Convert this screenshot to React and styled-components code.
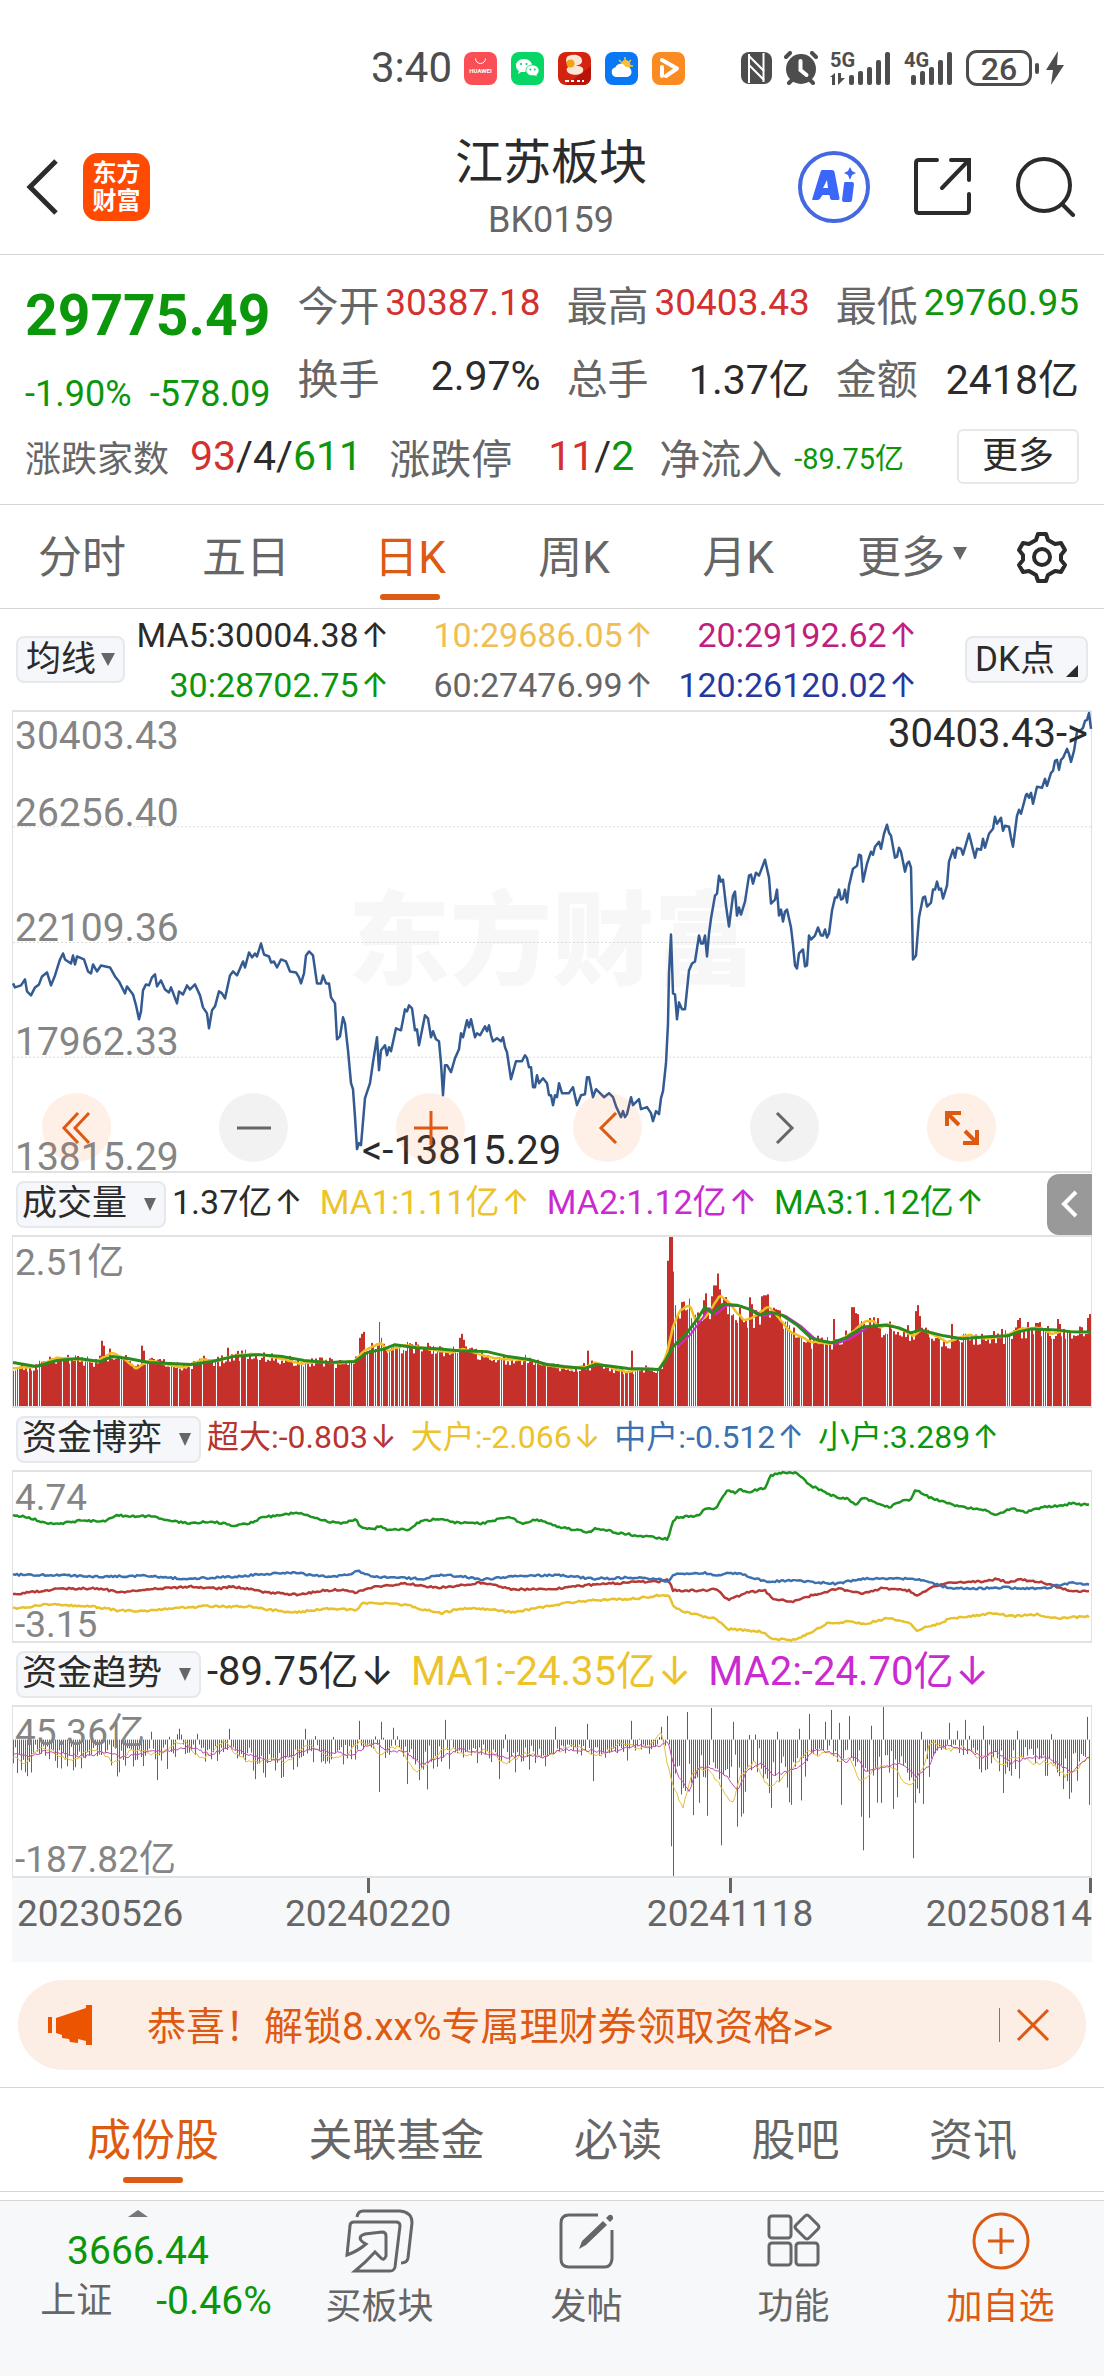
import React from 'react'
import styled, { createGlobalStyle } from 'styled-components'

const GlobalStyle = createGlobalStyle`
* {
    box-sizing: border-box;
}
body {
    margin: 0;
    background-color: #fff;
    color: #2b2b2b;
    font-family: Roboto, "Noto Sans CJK SC", sans-serif;
}
button {
    margin: 0;
    padding: 0;
    border: none;
    background: none;
    color: inherit;
    font: inherit;
    cursor: pointer;
}
a {
    color: inherit;
    text-decoration: none;
}
svg {
    display: block;
}
`;

const RED = '#d3302f';
const GREEN = '#0b960b';
const ORANGE = '#dd5a12';
const GREY = '#666';
const YELLOW = '#ecc32a';
const PURPLE = '#c92bd0';
const BLUE = '#3b71b0';

const Page = styled.div`
display: flex;
flex-direction: column;
min-height: 100vh;
white-space: nowrap;
`;

/* status bar */
const StatusBar = styled.div`
display: flex;
align-items: center;
height: 120px;
padding: 16px 40px 0 371px;
color: #4d4d4d;
`;
const Clock = styled.span`
font-size: 42px;
line-height: 48px;
`;
const AppIcons = styled.div`
display: flex;
gap: 14px;
margin-left: 12px;
`;
const Signals = styled.div`
display: flex;
align-items: center;
gap: 12px;
margin-left: auto;
`;
const Battery = styled.span`
position: relative;
width: 66px;
height: 36px;
margin-right: 2px;
border: 3px solid #4d4d4d;
border-radius: 11px;
font-size: 32px;
font-weight: 500;
line-height: 32px;
text-align: center;
&::after {
    content: '';
    position: absolute;
    top: 10px;
    right: -10px;
    width: 4px;
    height: 11px;
    border-radius: 2px;
    background-color: #4d4d4d;
}
`;

/* header */
const Header = styled.header`
display: grid;
grid-template-columns: 1fr auto 1fr;
align-items: center;
height: 135px;
padding: 0 28px 0 26px;
border-bottom: 1px solid #d6d6d6;
`;
const HeaderSide = styled.div`
display: flex;
align-items: center;
justify-content: ${props => props.end ? 'flex-end' : 'flex-start'};
gap: ${props => props.end ? '43px' : '24px'};
`;
const Logo = styled.a`
display: grid;
place-content: center;
width: 67px;
height: 68px;
border-radius: 15px;
background-color: #fe4a03;
color: #fff;
font-size: 24px;
font-weight: 700;
line-height: 28px;
text-align: center;
`;
const Titles = styled.div`
padding-top: 10px;
text-align: center;
`;
const Title = styled.h1`
margin: 0;
font-size: 48px;
font-weight: 400;
line-height: 56px;
`;
const Code = styled.div`
color: ${GREY};
font-size: 36px;
line-height: 58px;
`;

/* quote */
const Quote = styled.section`
display: flex;
flex-direction: column;
height: 250px;
padding: 11px 25px 0;
border-bottom: 1px solid #d6d6d6;
`;
const QuoteTop = styled.div`
display: grid;
grid-template-columns: 243fr 784fr;
column-gap: 27px;
`;
const Price = styled.div`
color: ${GREEN};
font-size: 57px;
font-weight: 700;
line-height: 100px;
`;
const Change = styled.div`
display: flex;
justify-content: space-between;
color: ${GREEN};
font-size: 36px;
line-height: 56px;
`;
const Stats = styled.dl`
display: grid;
grid-template-columns: repeat(3, 1fr);
align-content: start;
column-gap: 26px;
margin: 0;
`;
const Stat = styled.div`
display: flex;
align-items: center;
justify-content: space-between;
height: 73px;
dt {
    color: ${GREY};
    font-size: 41px;
}
dd {
    margin: 0;
    color: ${props => props.color};
    font-size: ${props => props.small ? '37px' : '41px'};
}
`;
const QuoteBottom = styled.div`
display: flex;
align-items: center;
height: 68px;
`;
const Label = styled.span`
margin-right: ${props => props.gap};
color: ${GREY};
font-size: ${props => props.small ? '36px' : '41px'};
`;
const Value = styled.span`
margin-right: ${props => props.gap};
font-size: ${props => props.small ? '29px' : '41px'};
`;
const Tone = styled.span`
color: ${props => props.color};
`;
const MoreButton = styled.button`
width: 122px;
height: 55px;
margin-left: auto;
border: 2px solid #e8e8e8;
border-radius: 6px;
font-size: 36px;
line-height: 48px;
`;

/* period tabs */
const Periods = styled.nav`
display: grid;
grid-template-columns: repeat(5, 164fr) 184fr 100fr;
height: 104px;
border-bottom: 1px solid #d6d6d6;
`;
const Tab = styled.button`
position: relative;
display: flex;
align-items: center;
justify-content: center;
gap: 8px;
padding-bottom: 6px;
color: ${props => props.$active ? ORANGE : GREY};
font-size: 44px;
&::after {
    content: '';
    display: ${props => props.$active ? 'block' : 'none'};
    position: absolute;
    bottom: 8px;
    left: calc(50% - 30px);
    width: 60px;
    height: 6px;
    border-radius: 3px;
    background-color: ${ORANGE};
}
`;
const SettingsButton = styled.button`
padding-left: 12px;
`;
const Caret = styled.i`
width: 0;
height: 0;
border-left: ${props => props.small ? '6px' : '7px'} solid transparent;
border-right: ${props => props.small ? '6px' : '7px'} solid transparent;
border-top: 13px solid ${GREY};
`;

/* moving averages */
const AverageBar = styled.div`
display: flex;
align-items: center;
justify-content: space-between;
height: 101px;
padding: 0 16px;
`;
const Chip = styled.button`
position: relative;
display: flex;
align-items: center;
gap: ${props => props.$wide ? '17px' : '5px'};
height: 47px;
padding: ${props => props.$wide ? '0 8px 0 4px' : '0 8px'};
border: 2px solid #e6e8ec;
border-radius: 8px;
background-color: #f6f7fa;
font-size: 35px;
line-height: 42px;
`;
const Corner = styled.i`
align-self: flex-end;
margin-bottom: 4px;
margin-left: 6px;
border-left: 12px solid transparent;
border-bottom: 12px solid #2b2b2b;
`;
const Arrow = styled.span`
margin-left: 2px;
font-family: Inter, sans-serif;
`;
const Averages = styled.div`
display: grid;
grid-template-columns: repeat(3, 264px);
flex: 1;
justify-content: end;
margin-right: 48px;
font-size: 34px;
line-height: 49px;
text-align: right;
`;

/* charts */
const Charts = styled.main`
padding: 0 12px;
`;
const Panel = styled.div`
position: relative;
height: ${props => props.tall ? '463px' : '173px'};
border: 1px solid #e2e2e2;
border-width: 2px 1px;
`;
const Plot = styled.svg`
position: absolute;
inset: 0;
width: 100%;
height: 100%;
overflow: visible;
`;
const Watermark = styled.div`
position: absolute;
inset: 0;
display: grid;
place-content: center;
color: #f7f7f7;
font-size: 102px;
font-weight: 900;
line-height: 110px;
`;
const Scale = styled.div`
position: relative;
display: grid;
grid-template-rows: repeat(4, 1fr);
height: 100%;
padding-left: 2px;
color: #858585;
font-size: 39px;
line-height: 28px;
`;
const ScaleBand = styled.div`
display: flex;
flex-direction: column;
justify-content: flex-end;
span:first-child:not(:last-child) {
    margin: 10px 0 auto;
}
`;
const Range = styled.div`
position: relative;
display: flex;
flex-direction: column;
justify-content: space-between;
height: 100%;
padding: 10px 2px 0;
color: #858585;
font-size: 37px;
line-height: 32px;
`;
const Mark = styled.span`
position: absolute;
${props => props.high ? 'top: 7px; right: 3px;' : 'bottom: 5px; left: 349px;'}
font-size: 40px;
line-height: 30px;
`;
const Controls = styled.div`
position: absolute;
right: 95px;
bottom: 9px;
left: 29px;
display: flex;
justify-content: space-between;
`;
const Round = styled.button`
display: grid;
place-content: center;
width: 69px;
height: 69px;
border-radius: 50%;
background-color: ${props => props.$warm ? 'rgba(250, 110, 40, 0.11)' : 'rgba(0, 0, 0, 0.05)'};
color: ${props => props.$warm ? ORANGE : GREY};
`;
const IndicatorBar = styled.div`
display: flex;
align-items: center;
gap: ${props => props.gap};
height: 62px;
padding-left: 4px;
font-size: ${props => props.size};
line-height: 50px;
${Chip} {
    margin-right: calc(6px - ${props => props.gap});
}
${Tone} {
    padding-bottom: 5px;
}
`;
const Collapse = styled.button`
display: grid;
place-content: center;
width: 45px;
height: 61px;
margin-left: auto;
border-radius: 12px 0 0 12px;
background-color: #999;
color: #fff;
`;
const Dates = styled.div`
display: grid;
grid-template-columns: 164fr 370fr 355fr 185fr;
height: 84px;
padding-left: 5px;
background-color: #f7f8fa;
color: ${GREY};
font-size: 37px;
line-height: 42px;
`;
const DateMark = styled.time`
display: flex;
flex-direction: column;
align-items: ${props => props.align};
&::before {
    content: '';
    width: 3px;
    height: 15px;
    background-color: ${props => props.align === 'flex-start' ? 'transparent' : GREY};
}
`;

/* banner */
const Banner = styled.aside`
display: flex;
align-items: center;
height: 90px;
margin: 18px 18px 17px;
padding: 0 36px 0 28px;
border-radius: 45px;
background-color: #fdeee5;
color: ${ORANGE};
font-size: 39px;
a {
    margin-left: 53px;
    padding-bottom: 4px;
}
`;
const CloseButton = styled.button`
display: flex;
align-items: center;
margin-left: auto;
padding-left: 16px;
border-left: 1px solid ${ORANGE};
`;

const Sections = styled.nav`
display: flex;
justify-content: space-between;
height: 105px;
padding: 0 87px;
border-top: 1px solid #d6d6d6;
border-bottom: 1px solid #d6d6d6;
`;

/* bottom bar */
const BottomBar = styled.footer`
display: grid;
grid-template-columns: 276fr repeat(4, 207fr);
flex: 1;
min-height: 176px;
margin-top: 8px;
border-top: 1px solid #d6d6d6;
background-color: #f7f8fa;
`;
const Index = styled.a`
display: flex;
flex-direction: column;
align-items: center;
padding-top: 9px;
color: ${GREEN};
font-size: 39px;
line-height: 50px;
&::before {
    content: '';
    margin-bottom: 9px;
    border: 10px solid transparent;
    border-top: none;
    border-bottom: 7px solid #777;
}
`;
const IndexRow = styled.div`
display: flex;
gap: 44px;
padding-left: 36px;
`;
const IndexName = styled.span`
color: ${GREY};
font-size: 36px;
`;
const Action = styled.button`
display: flex;
flex-direction: column;
align-items: center;
gap: 8px;
padding-top: 8px;
color: ${props => props.$accent ? ORANGE : GREY};
font-size: 36px;
line-height: 52px;
`;

/* data */
const price = [
    0, 272, 2, 276, 8, 274, 12, 268, 14, 280, 18, 284, 22, 276, 26, 273, 29, 265, 34, 261, 38, 274, 42, 264, 47, 248, 50, 242,
    52, 248, 58, 252, 60, 244, 62, 253, 64, 245, 71, 248, 75, 260, 78, 262, 80, 253, 84, 260, 88, 254, 97, 256, 102, 265,
    106, 270, 109, 276, 112, 282, 114, 275, 120, 283, 123, 294, 126, 308, 128, 300, 130, 279, 133, 273, 136, 274, 139, 266,
    142, 263, 144, 275, 148, 269, 152, 278, 156, 281, 158, 276, 164, 292, 166, 280, 170, 283, 174, 274, 177, 278, 182, 273,
    187, 284, 190, 296, 194, 302, 196, 317, 199, 299, 202, 295, 206, 280, 209, 282, 212, 287, 217, 264, 220, 260, 224, 264,
    230, 250, 232, 256, 236, 241, 239, 246, 242, 242, 244, 245, 248, 232, 251, 243, 256, 245, 258, 251, 261, 250, 264, 256,
    268, 248, 273, 250, 277, 260, 283, 261, 286, 266, 288, 272, 291, 262, 293, 244, 296, 240, 300, 244, 304, 272, 308, 272,
    310, 264, 313, 272, 316, 272, 318, 286, 322, 292, 324, 328, 327, 325, 330, 306, 332, 312, 335, 339, 338, 372, 340, 378,
    342, 406, 344, 438, 346, 432, 348, 434, 352, 387, 357, 372, 360, 351, 364, 326, 366, 359, 368, 339, 372, 334, 374, 344,
    376, 336, 378, 340, 383, 317, 388, 319, 392, 298, 394, 300, 396, 294, 399, 297, 402, 319, 404, 318, 406, 334, 409, 319,
    412, 304, 415, 307, 418, 326, 420, 320, 423, 328, 426, 330, 428, 352, 430, 384, 432, 354, 434, 354, 438, 361, 442, 347,
    446, 338, 448, 322, 450, 326, 454, 309, 456, 316, 458, 308, 462, 326, 464, 322, 467, 324, 472, 315, 474, 320, 476, 314,
    478, 324, 480, 330, 484, 327, 488, 330, 490, 326, 492, 336, 494, 341, 498, 368, 503, 350, 509, 350, 512, 344, 514, 347,
    516, 356, 518, 356, 520, 376, 522, 376, 524, 364, 526, 372, 530, 367, 534, 372, 536, 384, 538, 384, 540, 394, 542, 384,
    544, 386, 546, 372, 549, 382, 556, 382, 560, 376, 564, 394, 568, 384, 572, 383, 574, 366, 576, 366, 580, 386, 583, 378,
    591, 386, 596, 382, 600, 386, 603, 395, 608, 406, 610, 400, 612, 406, 614, 403, 618, 386, 620, 394, 626, 388, 628, 398,
    634, 396, 638, 402, 640, 410, 643, 400, 646, 403, 648, 387, 650, 380, 653, 352, 655, 312, 656, 262, 658, 223, 660, 282,
    662, 283, 664, 308, 666, 291, 669, 298, 672, 298, 676, 259, 679, 252, 682, 250, 686, 224, 688, 232, 690, 232, 692, 224,
    694, 245, 696, 222, 698, 207, 702, 184, 704, 182, 706, 164, 708, 170, 710, 168, 713, 194, 716, 215, 720, 184, 722, 180,
    724, 204, 726, 196, 728, 203, 732, 190, 736, 164, 738, 163, 740, 172, 743, 161, 746, 164, 752, 148, 756, 166, 758, 192,
    762, 188, 764, 178, 766, 204, 768, 198, 770, 210, 772, 200, 774, 198, 778, 216, 780, 233, 782, 254, 784, 257, 786, 242,
    790, 238, 792, 255, 794, 254, 796, 224, 798, 228, 802, 224, 805, 216, 808, 224, 810, 224, 812, 218, 814, 226, 816, 222,
    819, 199, 822, 186, 824, 186, 826, 178, 828, 188, 830, 187, 832, 178, 834, 191, 836, 174, 840, 157, 844, 154, 846, 143,
    848, 144, 850, 170, 854, 152, 858, 140, 860, 143, 862, 135, 866, 130, 868, 137, 871, 122, 874, 113, 876, 121, 878, 124,
    882, 146, 884, 145, 886, 136, 888, 140, 892, 160, 894, 152, 896, 150, 898, 156, 900, 248, 903, 244, 906, 206, 910, 186,
    912, 185, 914, 195, 918, 191, 920, 178, 922, 178, 924, 170, 926, 178, 928, 177, 930, 187, 934, 174, 936, 150, 940, 138,
    942, 146, 944, 136, 948, 137, 950, 143, 956, 122, 962, 146, 964, 137, 968, 138, 970, 127, 972, 136, 976, 122, 980, 117,
    982, 105, 984, 112, 988, 106, 990, 119, 992, 114, 996, 115, 998, 126, 1000, 135, 1004, 104, 1006, 98, 1008, 102, 1013, 83,
    1014, 82, 1016, 86, 1018, 81, 1020, 92, 1024, 75, 1029, 76, 1032, 67, 1034, 74, 1038, 61, 1040, 59, 1042, 49, 1044, 48,
    1046, 58, 1048, 48, 1050, 46, 1054, 37, 1056, 42, 1058, 50, 1061, 39, 1064, 20, 1068, 18, 1070, 16, 1072, 9, 1074, 8,
    1076, 1, 1078, 17,
];

const volumeSlow = [
    0, 127, 23, 131, 44, 125, 65, 123, 87, 126, 99, 121, 115, 123, 136, 127, 178, 129, 199, 126, 220, 121, 245, 119, 270, 121,
    291, 125, 315, 127, 342, 126, 354, 117, 372, 113, 382, 109, 403, 112, 424, 113, 446, 115, 474, 116, 495, 121, 516, 124,
    534, 129, 551, 131, 572, 133, 583, 129, 600, 131, 615, 133, 646, 134, 653, 124, 660, 111, 674, 97, 685, 82, 692, 71,
    699, 77, 710, 68, 724, 69, 736, 73, 747, 79, 757, 76, 769, 79, 784, 89, 798, 102, 808, 105, 819, 107, 833, 102, 850, 91,
    872, 89, 886, 92, 898, 97, 907, 94, 931, 100, 949, 103, 974, 101, 995, 100, 1005, 96, 1019, 93, 1044, 94, 1058, 96, 1078, 96,
];
const volumeFast = [
    0, 133, 23, 131, 44, 122, 65, 124, 83, 126, 99, 117, 111, 123, 123, 133, 137, 125, 153, 129, 171, 132, 189, 124, 206, 125,
    220, 120, 241, 118, 263, 122, 287, 128, 308, 126, 326, 128, 342, 125, 351, 115, 368, 107, 375, 115, 393, 109, 414, 113,
    439, 117, 449, 113, 474, 121, 491, 124, 516, 124, 534, 130, 558, 133, 574, 131, 583, 127, 597, 132, 615, 137, 625, 133,
    646, 134, 653, 121, 660, 91, 667, 74, 677, 69, 682, 83, 691, 83, 699, 71, 707, 59, 717, 67, 724, 77, 731, 84, 741, 81,
    755, 70, 762, 77, 777, 96, 798, 106, 816, 108, 833, 101, 853, 85, 861, 85, 867, 92, 875, 88, 889, 94, 900, 100, 909, 94,
    925, 101, 934, 107, 946, 102, 956, 99, 974, 103, 995, 99, 1008, 93, 1027, 92, 1039, 98, 1051, 95, 1073, 97, 1078, 95,
];
const volumePeaks = {
    88: 105, 90: 110, 128: 110, 130: 115, 214: 112, 346: 102, 348: 98, 350: 96, 366: 86, 446: 102, 448: 98, 450: 104, 574: 115, 618: 115,
    654: 24, 656: 0, 658: 0, 660: 35, 662: 69, 690: 64, 692: 57, 698: 60, 700: 49, 702: 49, 704: 37, 706: 53, 736: 61, 738: 68,
    748: 60, 750: 59, 752: 59, 754: 58, 820: 83, 838: 71, 840: 71, 842: 77, 844: 78, 902: 75, 904: 69, 906: 80, 938: 88,
    1004: 84, 1006: 82, 1014: 86, 1044: 83, 1046: 88, 1074: 82, 1076: 78,
};

const small = [
    0, 44, 16, 46, 34, 52, 48, 52, 69, 49, 90, 50, 104, 44, 139, 45, 153, 49, 178, 52, 199, 50, 220, 54, 236, 52, 249, 46, 273, 43,
    285, 41, 298, 45, 315, 50, 329, 52, 343, 48, 348, 56, 361, 58, 367, 54, 374, 58, 396, 58, 407, 50, 428, 47, 442, 51, 470, 52,
    484, 48, 498, 46, 509, 52, 523, 48, 544, 55, 576, 61, 583, 57, 608, 62, 622, 64, 655, 68, 659, 52, 664, 46, 685, 44, 694, 36,
    703, 37, 709, 26, 715, 18, 722, 21, 727, 18, 736, 20, 752, 16, 757, 4, 766, 1, 783, 1, 798, 14, 822, 25, 834, 27, 844, 33,
    850, 26, 861, 30, 876, 36, 886, 30, 898, 28, 902, 18, 917, 26, 935, 32, 952, 36, 970, 38, 983, 43, 999, 37, 1012, 41,
    1033, 35, 1051, 34, 1059, 31, 1069, 33, 1078, 32,
];
const middle = [
    0, 104, 30, 104, 87, 106, 129, 105, 171, 108, 220, 106, 255, 103, 280, 102, 315, 106, 336, 104, 345, 100, 358, 106, 410, 108,
    428, 104, 453, 106, 467, 109, 495, 106, 544, 104, 579, 108, 615, 107, 646, 108, 655, 112, 660, 104, 692, 102, 703, 105,
    717, 102, 731, 104, 752, 111, 784, 110, 822, 113, 850, 108, 902, 108, 917, 112, 935, 117, 960, 118, 995, 117, 1030, 118,
    1044, 115, 1058, 112, 1078, 114,
];
const huge = [
    0, 124, 23, 121, 48, 118, 90, 118, 104, 122, 139, 118, 178, 116, 206, 118, 218, 116, 234, 118, 252, 122, 287, 124, 308, 120,
    329, 119, 343, 122, 361, 116, 393, 113, 425, 117, 446, 115, 467, 112, 484, 115, 498, 119, 544, 118, 579, 114, 615, 112,
    625, 111, 646, 111, 655, 108, 660, 120, 696, 120, 703, 118, 715, 130, 734, 122, 752, 120, 759, 128, 780, 131, 801, 124,
    826, 118, 850, 123, 868, 118, 896, 120, 903, 125, 921, 116, 938, 112, 970, 111, 984, 108, 995, 112, 1005, 109, 1026, 111,
    1037, 114, 1058, 121, 1078, 120,
];
const large = [
    0, 138, 37, 134, 80, 136, 104, 140, 132, 141, 157, 138, 192, 136, 238, 136, 259, 140, 284, 142, 312, 138, 343, 140, 350, 133,
    361, 132, 396, 135, 410, 139, 429, 143, 446, 138, 481, 139, 498, 142, 523, 138, 551, 133, 576, 130, 622, 128, 655, 124,
    661, 136, 671, 142, 685, 144, 694, 148, 703, 148, 715, 159, 731, 160, 752, 162, 757, 169, 783, 170, 798, 162, 815, 153,
    840, 151, 850, 154, 875, 148, 898, 153, 903, 160, 924, 154, 938, 148, 981, 143, 1002, 146, 1023, 144, 1044, 148, 1078, 146,
];

const flow = [
    0, 47, 16, 51, 30, 45, 51, 47, 72, 50, 94, 45, 108, 51, 139, 45, 160, 44, 178, 40, 196, 48, 217, 41, 234, 47, 255, 55, 277, 50,
    298, 43, 315, 45, 340, 49, 354, 39, 365, 37, 372, 44, 393, 45, 407, 58, 425, 52, 446, 43, 474, 47, 495, 51, 516, 49, 530, 51,
    548, 43, 572, 44, 600, 46, 622, 39, 646, 40, 655, 34, 660, 57, 667, 72, 676, 86, 685, 61, 699, 62, 713, 69, 725, 84, 734, 65,
    748, 56, 759, 69, 773, 66, 787, 61, 801, 43, 822, 47, 833, 56, 843, 49, 852, 65, 868, 61, 879, 59, 889, 57, 903, 71, 917, 59,
    923, 41, 935, 39, 956, 44, 970, 51, 984, 45, 998, 57, 1016, 50, 1037, 52, 1058, 66, 1078, 49,
];
const flowPeaks = {
    14: 70, 144: 74, 242: 73, 366: 86, 394: 78, 406: 74, 580: 75, 658: 141, 660: 171, 694: 110, 708: 140, 724: 121, 758: 102,
    778: 99, 828: 99, 848: 111, 850: 145, 868: 97, 880: 103, 900: 153, 902: 97, 990: 87, 1056: 93, 1076: 99,
    138: 25, 166: 22, 216: 22, 292: 22, 346: 14, 368: 15, 380: 21, 432: 13, 542: 20, 574: 17, 618: 14, 648: 20, 654: 9, 674: 5,
    698: 1, 720: 15, 764: 25, 786: 22, 796: 7, 812: 15, 818: 3, 826: 16, 836: 9, 858: 19, 870: 0, 908: 25, 936: 16, 944: 24,
    952: 13, 970: 19, 1004: 24, 1074: 10,
};
const ZERO = 33;

// repeatable pseudo random in 0..1
const noise = (i, seed) => {
    const v = Math.sin(i * 12.9898 + seed * 78.233) * 43758.5453;
    return v - Math.floor(v);
};

const valueAt = (series, x) => {
    for (let i = 2; i < series.length; i += 2) {
        if (x <= series[i]) {
            const t = (x - series[i - 2]) / (series[i] - series[i - 2]);
            return series[i - 1] + t * (series[i + 1] - series[i - 1]);
        }
    }
    return series[series.length - 1];
};

const ticks = Array.from({ length: 539 }, (_, i) => i * 2);

// one point per trading day, with a little daily movement
const daily = (series, amount, seed) =>
    ticks.map(x => `${x},${(valueAt(series, x) + (noise(x, seed) - 0.5) * amount).toFixed(1)}`).join(' ');

const volumeBars = ticks.map(x => {
    const base = 171 - valueAt(volumeFast, x);
    const top = volumePeaks[x] !== undefined ? volumePeaks[x] : 171 - base * (0.87 + noise(x, 3) * 0.24);
    const up = volumePeaks[x] !== undefined ? x !== 366 && x !== 660 && x !== 662 : noise(Math.floor(x / 5), 8) * 0.6 + noise(x, 5) * 0.4 > 0.32;
    return { x, top, up };
});

const flowBars = ticks.map(x => {
    const peak = flowPeaks[x];
    const depth = (valueAt(flow, x) - ZERO) * (0.25 + noise(x, 11) * 1.9 * noise(x, 6) + noise(x, 2) * 0.75);
    if (peak !== undefined) return { x, y: peak };
    if (noise(x, 21) > 0.95) return { x, y: ZERO - noise(x, 4) * 6 };
    return { x, y: ZERO + Math.max(5, depth) };
});

const Line = ({ points, color, width = 2 }) => (
    <polyline points={points} fill='none' stroke={color} strokeWidth={width} strokeLinejoin='round' />
);

const PricePlot = () => (
    <Plot viewBox='0 0 1078 460' preserveAspectRatio='none'>
        {[115, 231, 346].map(y => (
            <line key={y} x1='0' x2='1078' y1={y} y2={y} stroke='#dcdcdc' strokeDasharray='2 2' />
        ))}
        <Line points={price.join(' ')} color='#335a91' width={2.5} />
    </Plot>
);

const VolumePlot = () => (
    <Plot viewBox='0 0 1078 171' preserveAspectRatio='none'>
        {volumeBars.map(bar => (
            <rect key={bar.x} x={bar.x} y={bar.top} width={bar.up ? 2 : 1} height={171 - bar.top} fill={bar.up ? '#c5302a' : '#2b8a2b'} />
        ))}
        <Line points={daily(volumeFast, 1, 1)} color='#f0c022' width={2.5} />
        <g transform='translate(4 1)'><Line points={volumeSlow.slice(66, 100).join(' ')} color={PURPLE} /></g>
        <Line points={volumeSlow.join(' ')} color='#2a8a1f' width={3} />
    </Plot>
);

const GamePlot = () => (
    <Plot viewBox='0 0 1078 171' preserveAspectRatio='none'>
        <Line points={daily(small, 2, 1)} color='#1c9420' width={2.5} />
        <Line points={daily(large, 2, 2)} color='#e8c22c' width={2.5} />
        <Line points={daily(huge, 2, 3)} color='#b53a35' width={2.5} />
        <Line points={daily(middle, 2, 4)} color={BLUE} width={2.5} />
    </Plot>
);

const FlowPlot = () => {
    const fast = ticks.map(x => {
        const y = valueAt(flow, Math.min(1078, x + 6));
        return `${x},${(46 + (y - 46) * 1.3 + Math.sin(x / 7) * 4 + (noise(x, 9) - 0.5) * 4).toFixed(1)}`;
    }).join(' ');
    return (
        <Plot viewBox='0 0 1078 171' preserveAspectRatio='none'>
            {flowBars.map(bar => (
                <rect
                    key={bar.x}
                    x={bar.x}
                    y={Math.min(ZERO, bar.y)}
                    width='1'
                    height={Math.abs(bar.y - ZERO)}
                    fill={bar.y < ZERO ? '#a04040' : '#2c8a2e'}
                />
            ))}
            <Line points={fast} color='#e0c040' width={1} />
            <Line points={daily(flow, 3, 12)} color='#c04cae' width={1} />
        </Plot>
    );
};

/* icons */
const Stroke = ({ w, h, width = 4, children, ...rest }) => (
    <svg width={w} height={h} viewBox={`0 0 ${w} ${h}`} fill='none' stroke='currentColor' strokeWidth={width} aria-hidden='true' {...rest}>
        {children}
    </svg>
);

const AppBadge = ({ fill, children }) => (
    <svg width='33' height='33' viewBox='0 0 33 33' aria-hidden='true'>
        <rect width='33' height='33' rx='8' fill={fill} />
        {children}
    </svg>
);

const StatusApps = () => (
    <AppIcons>
        <AppBadge fill='#fb4f57'>
            <path d='M11.500 6.500a5 5 0 0 0 10 0' fill='none' stroke='#fff' strokeWidth='1' />
            <text x='16.500' y='21' textAnchor='middle' fill='#fff' fontSize='6' fontWeight='700'>HUAWEI</text>
        </AppBadge>
        <AppBadge fill='#07d566'>
            <path d='M13 7c5 0 8 3 8 6.500S18 20 13 20l-3 0-3 2 .8-3C6 17.500 5 16 5 13.500 5 10 8 7 13 7z' fill='#fff' />
            <path d='M21.500 13c4 0 6.500 2.600 6.500 5.500 0 1.800-.8 3.200-2.200 4.200l.5 2.300-2.500-1.300c-5 .8-8.800-1.700-8.800-5.200s2.500-5.500 6.500-5.500z' fill='#fff' stroke='#07d566' strokeWidth='0.8' />
            <g fill='#07d566'><circle cx='10' cy='12' r='1.100' /><circle cx='15.500' cy='12' r='1.100' /><circle cx='19.300' cy='17.500' r='1' /><circle cx='23.800' cy='17.500' r='1' /></g>
        </AppBadge>
        <AppBadge fill='#d42410'>
            <path d='M33 14v11a8 8 0 0 1-8 8H8z' fill='#b81408' />
            <path d='M9 5c2-3 14-4 15 3 1 4-4 5-6 6 6 0 8 2 7 5-1 5-14 5-16 0-1-3 1-4 4-5-5-2-6-6-4-9z' fill='#fbe6d8' />
            <circle cx='12.500' cy='11.500' r='4' fill='#f2a316' />
            <path d='M7 29h4m2 0h3m3 0h3m2 0h2' stroke='#fff' strokeWidth='2' />
        </AppBadge>
        <AppBadge fill='#0a78f5'>
            <path d='M20 5v3m-6 0 2 2m10-2-2 2m1 4h3m-3 5-1-1' stroke='#fbc634' strokeWidth='1.500' />
            <circle cx='20.500' cy='13' r='5' fill='#fcbf2e' />
            <path d='M11 25a5 5 0 0 1-.5-9.800C12 10.500 19 10.500 20.500 15c4.500-.5 6 2.500 6 5s-2 5-5 5z' fill='#fff' />
        </AppBadge>
        <AppBadge fill='#fb8a22'>
            <path d='M10 24V15M10 8l15 8.500-11 7.500' fill='none' stroke='#fff' strokeWidth='4' strokeLinecap='round' strokeLinejoin='round' />
        </AppBadge>
    </AppIcons>
);

const NfcIcon = () => (
    <svg width='31' height='32' viewBox='0 0 31 32' aria-hidden='true'>
        <rect width='31' height='32' rx='8' fill='#4d4d4d' />
        <path d='M8 31V2M22.500 1v29' fill='none' stroke='#fff' strokeWidth='2' />
        <path d='M8 4 23 19M8 13l15 15' fill='none' stroke='#fff' strokeWidth='2' />
    </svg>
);

const AlarmIcon = () => (
    <Stroke w={34} h={34} strokeLinecap='round'>
        <circle cx='17' cy='18' r='15' fill='currentColor' stroke='none' />
        <path d='M2 6l4-4M28 2l4 4M5 32l3-3M29 32l-3-3' />
        <path d='M16.500 10v9l6 5' stroke='#fff' />
    </Stroke>
);

const SignalIcon = ({ name, wide }) => {
    const left = wide ? 19 : 7;
    const width = wide ? 62 : 50;
    return (
        <svg width={width} height='46' viewBox={`0 -6 ${width} 46`} fill='#4d4d4d' aria-hidden='true'>
            <text x='0' y='16' fontSize='20' fontWeight='700'>{name}</text>
            {wide && <path d='M0 26l5-4v12H2v-8zM8 22h3v5l4 0-7 7z' />}
            {[10, 14, 18, 25, 33].map((h, i) => (
                <rect key={h} x={left + i * (wide ? 9 : 9)} y={34 - h} width='5' height={h} rx='2' />
            ))}
        </svg>
    );
};

const BoltIcon = () => (
    <svg width='18' height='34' viewBox='0 0 18 34' aria-hidden='true'>
        <path d='M12 0 0 19h7L5 34 18 14h-7z' fill='#4d4d4d' />
    </svg>
);

const AiIcon = () => (
    <svg width='72' height='72' viewBox='0 0 72 72' aria-hidden='true'>
        <circle cx='36' cy='36' r='34' fill='none' stroke='#4468e2' strokeWidth='4' />
        <path fillRule='evenodd' fill='#3b66fa' d='M24 19h10q2 0 2.500 2l5 26q.5 2-1.500 2h-6q-1.500 0-2-2l-.5-3h-7l-2 3q-1 2-3 2h-4q-2 0-1-2l8-26q.5-2 1.500-2zM29 29l-4 8h5z' />
        <path fill='#3b66fa' d='M47 31h7q2 0 2 2l-2 16q0 2-2 2h-6q-2 0-2-2l2-16q0-2 1-2zM52 16l2 4 4 2-4 2-2 5-2-5-4-2 4-2z' />
    </svg>
);

const GearIcon = () => (
    <Stroke w={52} h={52} width={4}>
        <path strokeLinejoin='round' d='M22 3h8l2 6 7 4 6-1 4 7-4 5v5l4 5-4 7-6-1-7 4-2 6h-8l-2-6-7-4-6 1-4-7 4-5v-5l-4-5 4-7 6 1 7-4z' />
        <circle cx='26' cy='26' r='8' />
    </Stroke>
);

const HornIcon = () => (
    <svg width='48' height='40' viewBox='0 0 48 40' fill='#ec5400' aria-hidden='true'>
        <path d='M2 12h4v16H2zM10 13 40 3V0h6v40h-6v-4l-8-2v4l-8-1-1-3-7-1v-3l-6-2z' />
    </svg>
);

const BuyIcon = () => (
    <Stroke w={70} h={64} width={3}>
        <path d='M12 8q1-6 6-6h37q12 1 12 12l-4 35q-1 5-7 5' />
        <path d='M10 62h35q4 0 5-4l5-41q0-4-4-4H9q-4 0-4 4L2 46q11-4 19-11-8-4-5-8 1-1 4-2l17-2q4 0 4 4v20q-2 5-5 2l-6-6Q21 53 10 62z' strokeLinejoin='miter' />
    </Stroke>
);

const PostIcon = () => (
    <Stroke w={56} h={64} width={3}>
        <path d='M39 6H10q-8 0-8 8v36q0 8 8 8h36q6 0 7-8V21' />
        <path d='M20 40l3-8 21-20 4 4-21 20zM47 9l3-3q3-1 4 2v2l-3 3z' fill='currentColor' stroke='none' />
    </Stroke>
);

const AppsIcon = () => (
    <Stroke w={54} h={64} width={3}>
        <rect x='2' y='7' width='22' height='22' rx='3' />
        <rect x='2' y='34' width='22' height='22' rx='3' />
        <rect x='29' y='34' width='22' height='22' rx='3' />
        <path d='M38 7q2-2 4 0l9 9q2 2 0 4l-9 9q-2 2-4 0l-9-9q-2-2 0-4z' />
    </Stroke>
);

const AddIcon = () => (
    <Stroke w={58} h={64} width={3}>
        <circle cx='29' cy='32' r='27' />
        <path d='M29 19v26M16 32h26' />
    </Stroke>
);

const averages = [
    ['MA5:30004.38', '#2b2b2b'],
    ['10:29686.05', '#efbe54'],
    ['20:29192.62', '#bf2080'],
    ['30:28702.75', GREEN],
    ['60:27476.99', GREY],
    ['120:26120.02', '#26389e'],
];

const Reading = ({ color, down, children }) => (
    <Tone color={color}>{children}<Arrow>{down ? '↓' : '↑'}</Arrow></Tone>
);

const App = () => {
    return (
        <Page lang='zh-CN'>
            <GlobalStyle />
            <StatusBar>
                <Clock>3:40</Clock>
                <StatusApps />
                <Signals>
                    <NfcIcon />
                    <AlarmIcon />
                    <SignalIcon name='5G' wide />
                    <SignalIcon name='4G' />
                    <Battery>26</Battery>
                    <BoltIcon />
                </Signals>
            </StatusBar>

            <Header>
                <HeaderSide>
                    <button aria-label='返回'>
                        <Stroke w={33} h={56} width={5}><path d='M30 2 4 28l26 26' /></Stroke>
                    </button>
                    <Logo href='#home'><span>东方</span><span>财富</span></Logo>
                </HeaderSide>
                <Titles>
                    <Title>江苏板块</Title>
                    <Code>BK0159</Code>
                </Titles>
                <HeaderSide end>
                    <button aria-label='Ai'><AiIcon /></button>
                    <button aria-label='分享'>
                        <Stroke w={60} h={60} strokeLinecap='round'>
                            <path d='M24 3H6q-3 0-3 3v47q0 3 3 3h47q3 0 3-3V37M38 3h18v20M55 4 29 31' />
                        </Stroke>
                    </button>
                    <button aria-label='搜索'>
                        <Stroke w={60} h={60} strokeLinecap='round'>
                            <circle cx='28' cy='28' r='26' />
                            <path d='M46 47l11 11' />
                        </Stroke>
                    </button>
                </HeaderSide>
            </Header>

            <Quote>
                <QuoteTop>
                    <div>
                        <Price>29775.49</Price>
                        <Change><span>-1.90%</span><span>-578.09</span></Change>
                    </div>
                    <Stats>
                        <Stat color={RED} small><dt>今开</dt><dd>30387.18</dd></Stat>
                        <Stat color={RED} small><dt>最高</dt><dd>30403.43</dd></Stat>
                        <Stat color={GREEN} small><dt>最低</dt><dd>29760.95</dd></Stat>
                        <Stat><dt>换手</dt><dd>2.97%</dd></Stat>
                        <Stat><dt>总手</dt><dd>1.37亿</dd></Stat>
                        <Stat><dt>金额</dt><dd>2418亿</dd></Stat>
                    </Stats>
                </QuoteTop>
                <QuoteBottom>
                    <Label small gap='21px'>涨跌家数</Label>
                    <Value gap='27px'><Tone color={RED}>93</Tone>/4/<Tone color={GREEN}>611</Tone></Value>
                    <Label gap='36px'>涨跌停</Label>
                    <Value gap='25px'><Tone color={RED}>11</Tone>/<Tone color={GREEN}>2</Tone></Value>
                    <Label gap='12px'>净流入</Label>
                    <Value small><Tone color={GREEN}>-89.75亿</Tone></Value>
                    <MoreButton>更多</MoreButton>
                </QuoteBottom>
            </Quote>

            <Periods>
                <Tab>分时</Tab>
                <Tab>五日</Tab>
                <Tab $active>日K</Tab>
                <Tab>周K</Tab>
                <Tab>月K</Tab>
                <Tab>更多<Caret /></Tab>
                <SettingsButton aria-label='设置'><GearIcon /></SettingsButton>
            </Periods>

            <AverageBar>
                <Chip>均线<Caret /></Chip>
                <Averages>
                    {averages.map(([text, color]) => (
                        <Reading key={text} color={color}>{text}</Reading>
                    ))}
                </Averages>
                <Chip>DK点<Corner /></Chip>
            </AverageBar>

            <Charts>
                <Panel tall>
                    <Watermark>东方财富</Watermark>
                    <PricePlot />
                    <Scale>
                        <ScaleBand><span>30403.43</span><span>26256.40</span></ScaleBand>
                        <ScaleBand><span>22109.36</span></ScaleBand>
                        <ScaleBand><span>17962.33</span></ScaleBand>
                        <ScaleBand><span>13815.29</span></ScaleBand>
                    </Scale>
                    <Mark high>30403.43-&gt;</Mark>
                    <Mark>&lt;-13815.29</Mark>
                    <Controls>
                        <Round $warm aria-label='最早'>
                            <Stroke w={32} h={32} width={3}><path d='M17 1 3 16l14 15M28 1 14 16l14 15' /></Stroke>
                        </Round>
                        <Round aria-label='缩小'>
                            <Stroke w={34} h={32} width={3}><path d='M0 16h34' /></Stroke>
                        </Round>
                        <Round $warm aria-label='放大'>
                            <Stroke w={34} h={34} width={3}><path d='M0 17h34M17 0v34' /></Stroke>
                        </Round>
                        <Round $warm aria-label='向左'>
                            <Stroke w={20} h={32} width={3}><path d='M18 1 3 16l15 15' /></Stroke>
                        </Round>
                        <Round aria-label='向右'>
                            <Stroke w={20} h={32} width={3}><path d='M2 1l15 15L2 31' /></Stroke>
                        </Round>
                        <Round $warm aria-label='全屏'>
                            <Stroke w={34} h={34}><path d='M2 15V2h14M2 2l12 12M32 19v13H18M32 32 20 20' /></Stroke>
                        </Round>
                    </Controls>
                </Panel>

                <IndicatorBar gap='17px' size='34px'>
                    <Chip $wide>成交量<Caret small /></Chip>
                    <Reading>1.37亿</Reading>
                    <Reading color={YELLOW}>MA1:1.11亿</Reading>
                    <Reading color={PURPLE}>MA2:1.12亿</Reading>
                    <Reading color={GREEN}>MA3:1.12亿</Reading>
                    <Collapse aria-label='收起'>
                        <Stroke w={18} h={28}><path d='M15 2 3 14l12 12' /></Stroke>
                    </Collapse>
                </IndicatorBar>
                <Panel>
                    <VolumePlot />
                    <Range><span>2.51亿</span></Range>
                </Panel>

                <IndicatorBar gap='14px' size='32px'>
                    <Chip $wide>资金博弈<Caret small /></Chip>
                    <Reading color='#b83430' down>超大:-0.803</Reading>
                    <Reading color={YELLOW} down>大户:-2.066</Reading>
                    <Reading color={BLUE}>中户:-0.512</Reading>
                    <Reading color={GREEN}>小户:3.289</Reading>
                </IndicatorBar>
                <Panel>
                    <GamePlot />
                    <Range><span>4.74</span><span>-3.15</span></Range>
                </Panel>

                <IndicatorBar gap='17px' size='40px'>
                    <Chip $wide>资金趋势<Caret small /></Chip>
                    <Reading down>-89.75亿</Reading>
                    <Reading color={YELLOW} down>MA1:-24.35亿</Reading>
                    <Reading color={PURPLE} down>MA2:-24.70亿</Reading>
                </IndicatorBar>
                <Panel>
                    <FlowPlot />
                    <Range><span>45.36亿</span><span>-187.82亿</span></Range>
                </Panel>
                <Dates>
                    <DateMark align='flex-start'>20230526</DateMark>
                    <DateMark align='center'>20240220</DateMark>
                    <DateMark align='center'>20241118</DateMark>
                    <DateMark align='flex-end'>20250814</DateMark>
                </Dates>
            </Charts>

            <Banner>
                <HornIcon />
                <a href='#coupon'>恭喜！解锁8.xx%专属理财券领取资格&gt;&gt;</a>
                <CloseButton aria-label='关闭'>
                    <Stroke w={34} h={34} width={3}><path d='M2 2l30 30M32 2 2 32' /></Stroke>
                </CloseButton>
            </Banner>

            <Sections>
                <Tab $active>成份股</Tab>
                <Tab>关联基金</Tab>
                <Tab>必读</Tab>
                <Tab>股吧</Tab>
                <Tab>资讯</Tab>
            </Sections>

            <BottomBar>
                <Index href='#index'>
                    <span>3666.44</span>
                    <IndexRow><IndexName>上证</IndexName><span>-0.46%</span></IndexRow>
                </Index>
                <Action><BuyIcon />买板块</Action>
                <Action><PostIcon />发帖</Action>
                <Action><AppsIcon />功能</Action>
                <Action $accent><AddIcon />加自选</Action>
            </BottomBar>
        </Page>
    )
}

export default App
